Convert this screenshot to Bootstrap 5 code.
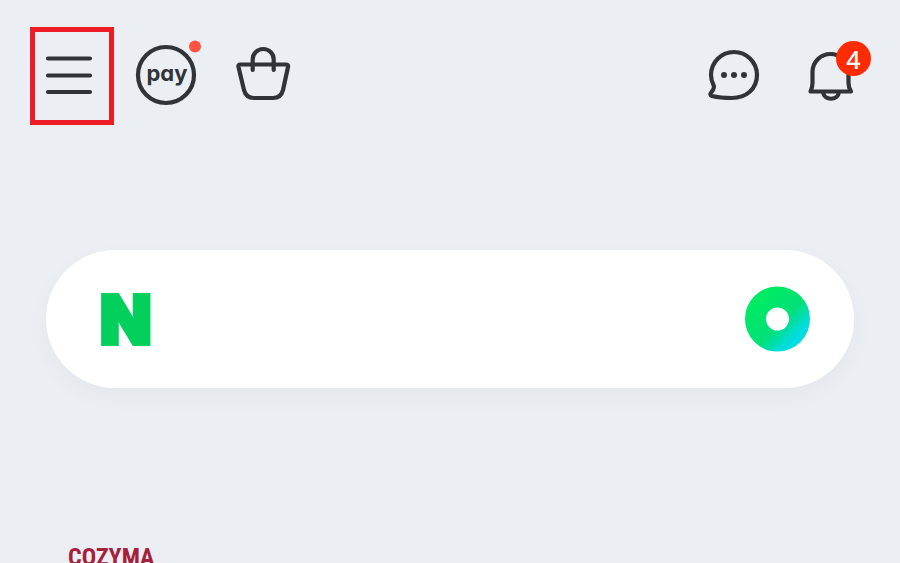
<!DOCTYPE html>
<html lang="en">
<head>
<meta charset="utf-8">
<meta name="viewport" content="width=device-width, initial-scale=1">
<title>Home</title>
<link href="https://cdn.jsdelivr.net/npm/bootstrap@5.3.0/dist/css/bootstrap.min.css" rel="stylesheet">
<style>
body { background: #ebeef3; font-family: Inter, "Liberation Sans", sans-serif; overflow-x: hidden; }
.screen { height: 100vh; overflow: hidden; }
.topbar { padding: 27px 38px 0 30px; }
.tool-group { gap: 32px; }
.tool { color: #303338; line-height: 1; border: 0; background: none; padding: 0; }
.tool svg { display: block; overflow: visible; fill: none; stroke: currentColor; stroke-width: 4.2; stroke-linecap: round; stroke-linejoin: round; }
.tool-menu { border: 5px solid #ee1c25; padding: 12px 11px; margin-right: 20px; }
.pay-word { font: 700 22px Inter, sans-serif; font-feature-settings: "cv11"; fill: currentColor; stroke: none; }
.count { top: -3px; right: -9px; width: 35px; height: 35px; background: #ff2b05; color: #fff; font: 500 25px "Noto Sans", sans-serif; }
.searchbar { margin: 125px 46px 0; height: 138px; padding: 0 44px 0 54px; background: #fff; box-shadow: 0 8px 24px rgba(40, 60, 60, .035); }
.brand-letter { font: 900 67px Inter, sans-serif; color: #03cf5d; -webkit-text-stroke: 4px #03cf5d; text-decoration: none; }
.search-field { border: 0; background: none; outline: 0; min-width: 0; font-size: 32px; }
.shop-name { margin: 155px 46px 0; padding-left: 22px; font: 700 24px/28px "Roboto Condensed", Roboto, sans-serif; color: #a5203a; }
</style>
</head>
<body>
<div class="screen">
  <header class="topbar d-flex align-items-center justify-content-between">
    <nav class="d-flex align-items-center" aria-label="Shortcuts">
      <button type="button" class="tool tool-menu" aria-label="Menu">
        <svg width="52" height="64" viewBox="0 0 52 64"><path d="M2 14.500H44M2 31.500H44M2 48H44"/></svg>
      </button>
      <div class="tool-group d-flex">
        <button type="button" class="tool" aria-label="Pay">
          <svg width="64" height="64" viewBox="0 0 64 64">
            <circle cx="32" cy="31" r="28"/>
            <text class="pay-word" x="33" y="37" text-anchor="middle">pay</text>
            <circle cx="61" cy="2.500" r="6" fill="#ff543f" stroke="none"/>
          </svg>
        </button>
        <button type="button" class="tool" aria-label="Shopping bag">
          <svg width="64" height="64" viewBox="0 0 64 64">
            <path d="M10.500 20.500H56q2.500 0 2 2.500L53 46Q51 54 43 54H24Q16 54 14 46L8.500 23Q8 20.500 10.500 20.500Z"/>
            <path d="M22.700 26V15.500a10.500 10.500 0 0 1 21 0V26"/>
          </svg>
        </button>
      </div>
    </nav>
    <div class="tool-group d-flex">
      <button type="button" class="tool" aria-label="Messages">
        <svg width="64" height="64" viewBox="0 0 64 64">
          <path d="M9 31A23 23 0 0 1 55 31C55 45 44 54 30 54Q18 54 10 52Q7 51 9.500 48Q13 44 11.500 41Q9 36 9 31Z"/>
          <g fill="currentColor" stroke="none"><circle cx="22" cy="31" r="3"/><circle cx="32" cy="31" r="3"/><circle cx="42" cy="31" r="3"/></g>
        </svg>
      </button>
      <button type="button" class="tool position-relative" aria-label="Notifications, 4 new">
        <svg width="64" height="64" viewBox="0 0 64 64">
          <path d="M14.500 28a18 18 0 0 1 36 0V39Q50.500 43 53 47.500H12.500Q14.500 43 14.500 39Z"/>
          <path d="M25 48C26 57 40 57 41 48"/>
        </svg>
        <span class="count position-absolute rounded-circle d-flex align-items-center justify-content-center">4</span>
      </button>
    </div>
  </header>

  <main>
    <form class="searchbar rounded-pill d-flex align-items-center" role="search">
      <a class="brand-letter" href="#">N</a>
      <input class="search-field flex-grow-1 mx-4" type="text" aria-label="Search">
      <button type="button" class="tool" aria-label="Quick search">
        <svg width="65" height="65" viewBox="0 0 65 65">
          <defs><linearGradient id="ring" x1="0.1" y1="0.1" x2="0.9" y2="0.9"><stop offset="0" stop-color="#00ea64"/><stop offset=".6" stop-color="#00e078"/><stop offset="1" stop-color="#00dce0"/></linearGradient></defs>
          <circle cx="32.500" cy="32" r="22" stroke="url(#ring)" stroke-width="21"/>
        </svg>
      </button>
    </form>
    <p class="shop-name">COZYMA</p>
  </main>
</div>
<script src="https://cdn.jsdelivr.net/npm/bootstrap@5.3.0/dist/js/bootstrap.bundle.min.js"></script>
</body>
</html>
